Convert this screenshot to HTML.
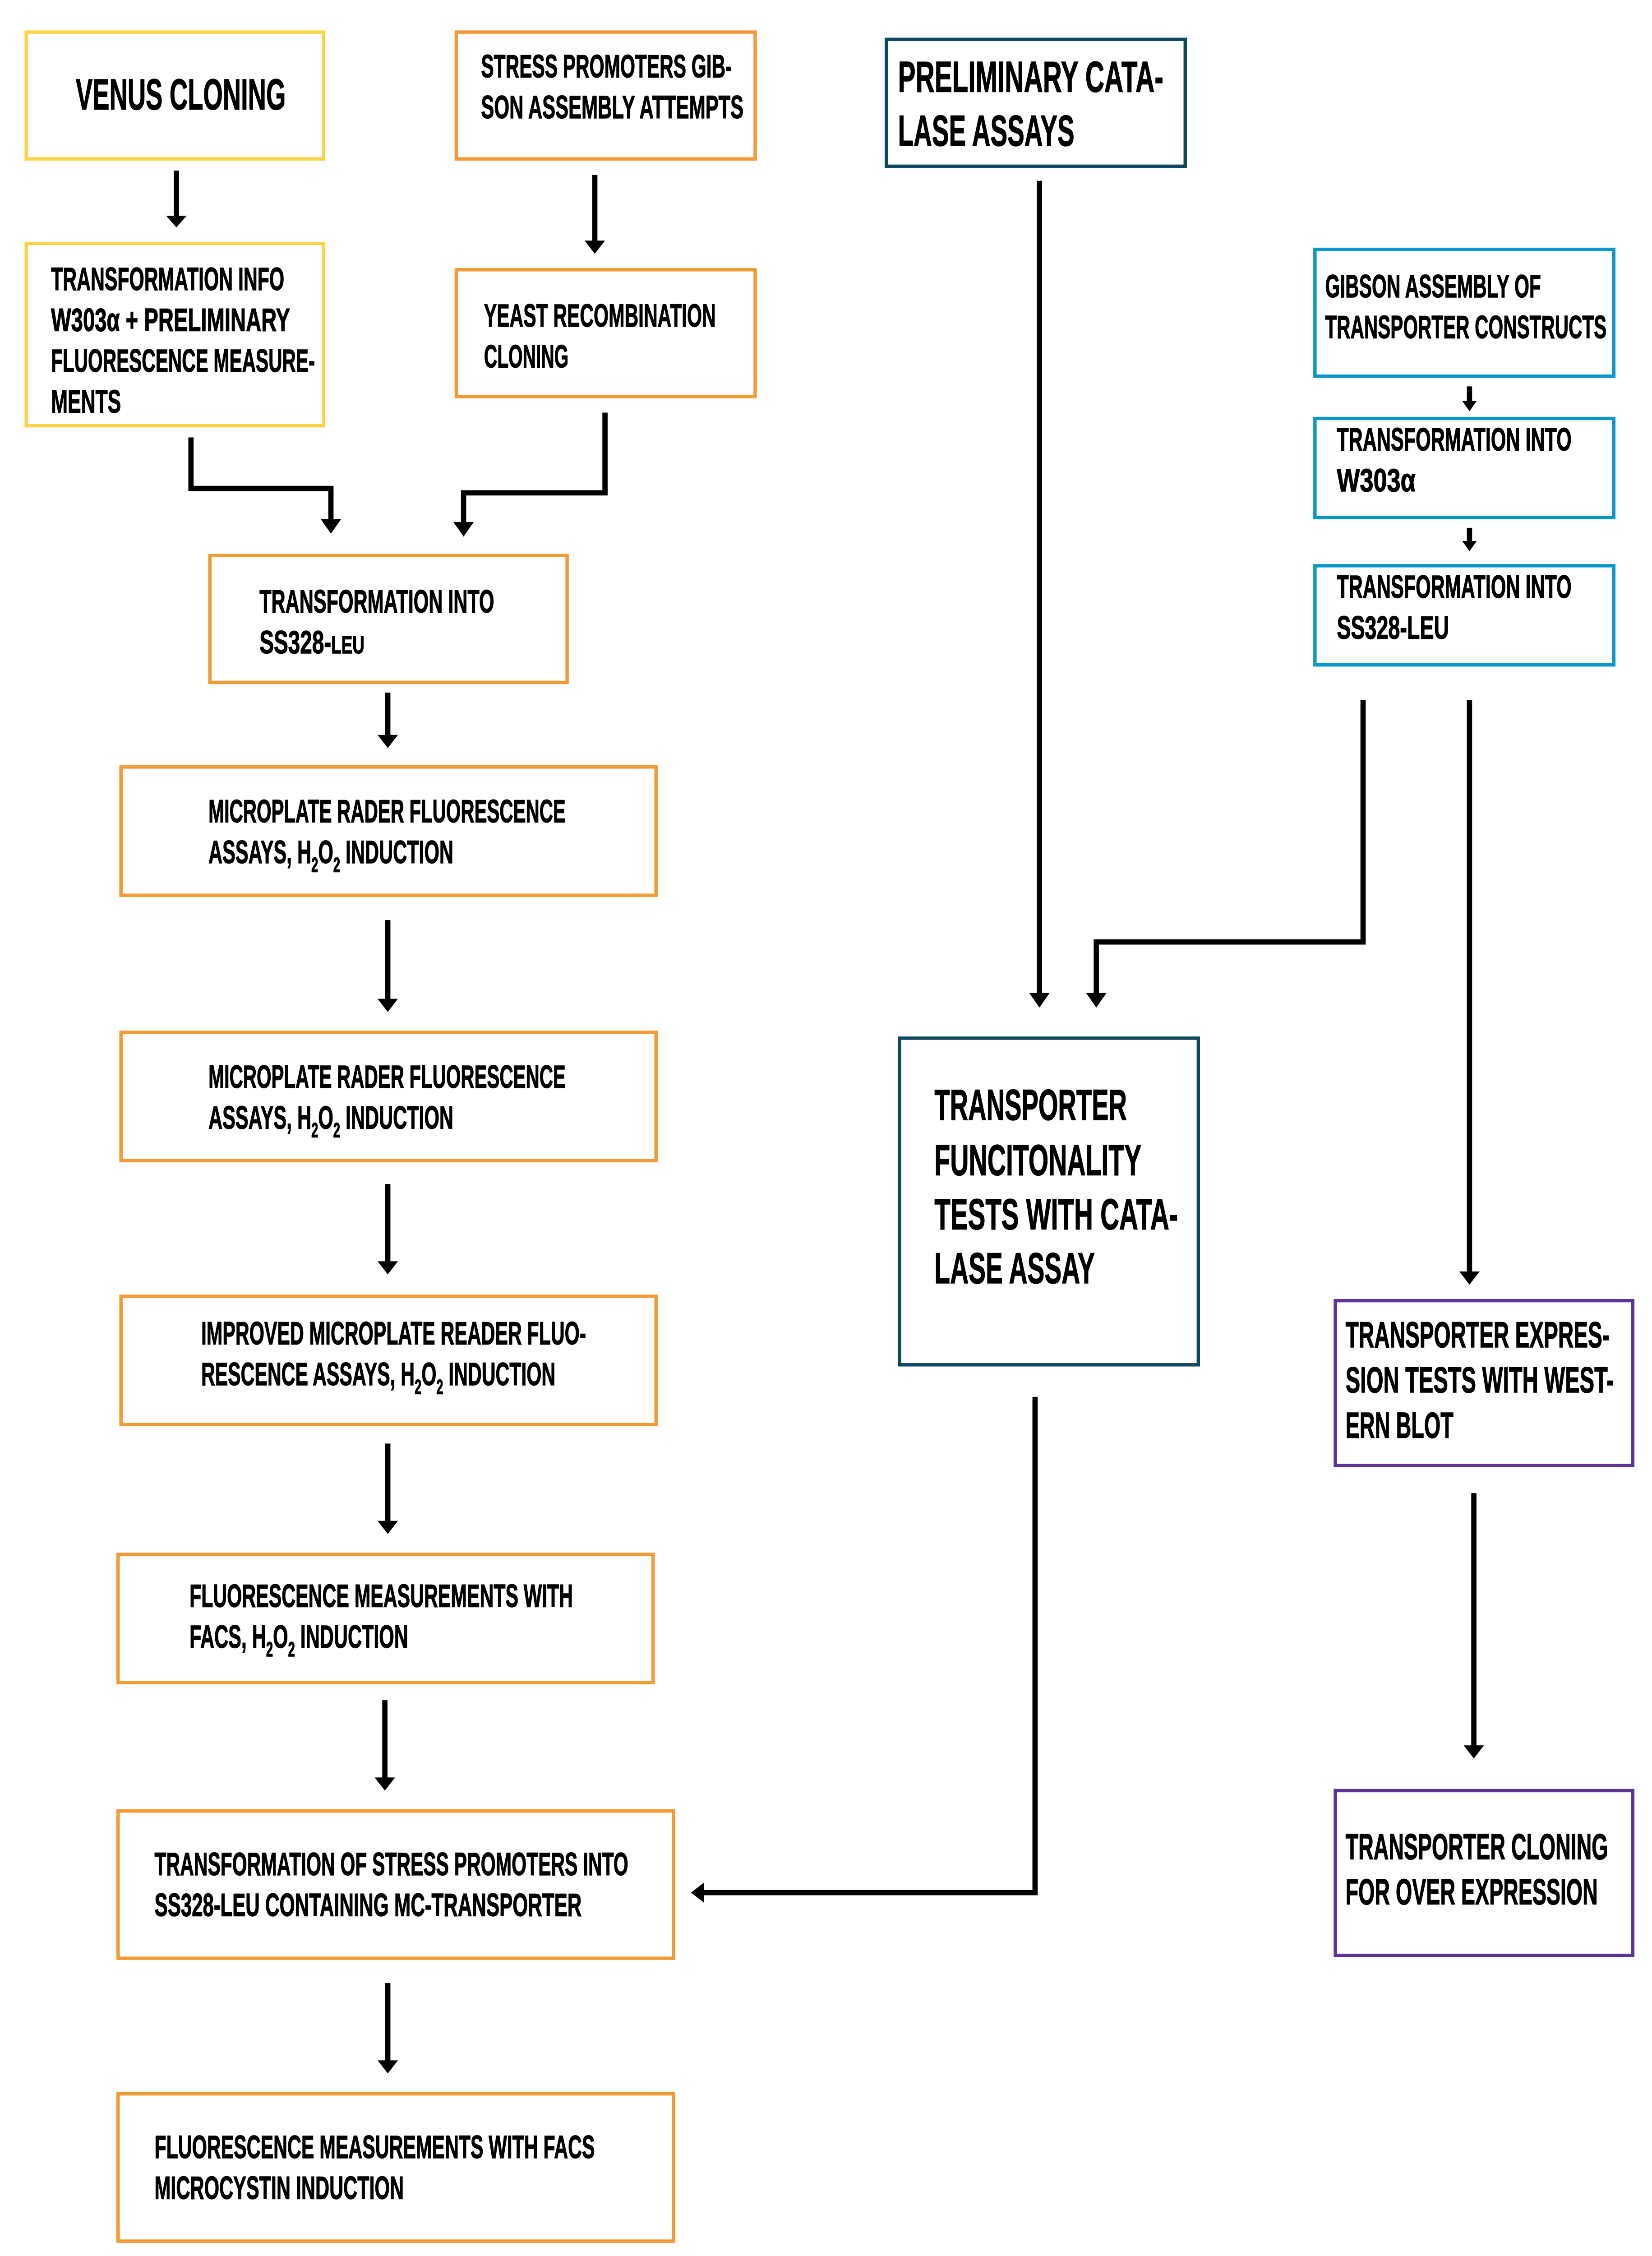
<!DOCTYPE html>
<html><head><meta charset="utf-8">
<style>
html,body{margin:0;padding:0;background:#fff;width:3662px;height:5064px;overflow:hidden;}
svg{display:block;position:absolute;left:0;top:0;}
text{font-family:"Liberation Sans",sans-serif;font-weight:bold;fill:#000;stroke:#000;stroke-width:0.45;}
</style></head>
<body>
<svg width="3662" height="5064" viewBox="0 0 1133.2 1567" preserveAspectRatio="none" xmlns="http://www.w3.org/2000/svg">
<rect width="1140" height="1580" fill="#fff"/>
<g fill="none" stroke-width="2.3">
<rect x="18" y="22" width="204" height="87" stroke="#FDD34A"/>
<rect x="313" y="22" width="205" height="87" stroke="#F49A35"/>
<rect x="608" y="27" width="205" height="87" stroke="#0E4761"/>
<rect x="18" y="167" width="204" height="125" stroke="#FDD34A"/>
<rect x="313" y="185" width="205" height="87" stroke="#F49A35"/>
<rect x="902" y="171" width="205" height="87" stroke="#0A96CC"/>
<rect x="902" y="287" width="205" height="68" stroke="#0A96CC"/>
<rect x="902" y="388" width="205" height="68" stroke="#0A96CC"/>
<rect x="144" y="381" width="245" height="87" stroke="#F49A35"/>
<rect x="83" y="526" width="367" height="88" stroke="#F49A35"/>
<rect x="83" y="708" width="367" height="88" stroke="#F49A35"/>
<rect x="83" y="889" width="367" height="88" stroke="#F49A35"/>
<rect x="81" y="1066" width="367" height="88" stroke="#F49A35"/>
<rect x="81" y="1242" width="381" height="101" stroke="#F49A35"/>
<rect x="81" y="1436" width="381" height="101" stroke="#F49A35"/>
<rect x="617" y="712" width="205" height="224" stroke="#0E4761"/>
<rect x="916" y="892" width="204" height="113" stroke="#5B3496"/>
<rect x="916" y="1228" width="204" height="113" stroke="#5B3496"/>
</g>
<g fill="none" stroke="#000" stroke-width="3.6">
<path d="M121 117V150"/>
<path d="M408 120V167"/>
<path d="M131 300V335H227V358"/>
<path d="M415 283V338H318V360"/>
<path d="M266 475V506"/>
<path d="M266 631V687"/>
<path d="M266 812V867"/>
<path d="M266 990V1045"/>
<path d="M264 1166V1221"/>
<path d="M266 1360V1415"/>
<path d="M713 124V683"/>
<path d="M935 480V646H752V683"/>
<path d="M1008 480V874"/>
<path d="M1008 265V277"/>
<path d="M1008 362V373"/>
<path d="M710 958V1298H481"/>
<path d="M1011 1024V1199"/>
</g>
<g fill="#000">
<path d="M114 148H128L121 156Z"/>
<path d="M401 165H415L408 174Z"/>
<path d="M220 356H234L227 366Z"/>
<path d="M311 358H325L318 368Z"/>
<path d="M259 504H273L266 513Z"/>
<path d="M259 685H273L266 694Z"/>
<path d="M259 865H273L266 874Z"/>
<path d="M259 1043H273L266 1052Z"/>
<path d="M257 1219H271L264 1228Z"/>
<path d="M259 1413H273L266 1422Z"/>
<path d="M706 681H720L713 691Z"/>
<path d="M745 681H759L752 691Z"/>
<path d="M1001 872H1015L1008 881Z"/>
<path d="M1003 275H1013L1008 282Z"/>
<path d="M1003 371H1013L1008 378Z"/>
<path d="M1004 1197H1018L1011 1206Z"/>
<path d="M483 1291V1305L474 1298Z"/>
</g>
<g>
<text x="52" y="75" font-size="30" textLength="144" lengthAdjust="spacingAndGlyphs">VENUS CLONING</text>
<text x="330" y="53" font-size="22" textLength="172" lengthAdjust="spacingAndGlyphs">STRESS PROMOTERS GIB-</text>
<text x="330" y="81" font-size="22" textLength="180" lengthAdjust="spacingAndGlyphs">SON ASSEMBLY ATTEMPTS</text>
<text x="616" y="63" font-size="30" textLength="182" lengthAdjust="spacingAndGlyphs">PRELIMINARY CATA-</text>
<text x="616" y="100" font-size="30" textLength="121" lengthAdjust="spacingAndGlyphs">LASE ASSAYS</text>
<text x="35" y="199" font-size="22" textLength="160" lengthAdjust="spacingAndGlyphs">TRANSFORMATION INFO</text>
<text x="35" y="227" font-size="22" textLength="164" lengthAdjust="spacingAndGlyphs">W303α + PRELIMINARY</text>
<text x="35" y="255" font-size="22" textLength="181" lengthAdjust="spacingAndGlyphs">FLUORESCENCE MEASURE-</text>
<text x="35" y="283" font-size="22" textLength="48" lengthAdjust="spacingAndGlyphs">MENTS</text>
<text x="332" y="224" font-size="22" textLength="159" lengthAdjust="spacingAndGlyphs">YEAST RECOMBINATION</text>
<text x="332" y="252" font-size="22" textLength="58" lengthAdjust="spacingAndGlyphs">CLONING</text>
<text x="909" y="204" font-size="22" textLength="148" lengthAdjust="spacingAndGlyphs">GIBSON ASSEMBLY OF</text>
<text x="909" y="232" font-size="22" textLength="193" lengthAdjust="spacingAndGlyphs">TRANSPORTER CONSTRUCTS</text>
<text x="917" y="309" font-size="22" textLength="161" lengthAdjust="spacingAndGlyphs">TRANSFORMATION INTO</text>
<text x="917" y="337" font-size="22" textLength="54" lengthAdjust="spacingAndGlyphs">W303α</text>
<text x="917" y="410" font-size="22" textLength="161" lengthAdjust="spacingAndGlyphs">TRANSFORMATION INTO</text>
<text x="917" y="438" font-size="22" textLength="77" lengthAdjust="spacingAndGlyphs">SS328-LEU</text>
<text x="178" y="420" font-size="22" textLength="161" lengthAdjust="spacingAndGlyphs">TRANSFORMATION INTO</text>
<text x="178" y="448" font-size="22" textLength="72" lengthAdjust="spacingAndGlyphs">SS328-<tspan font-size="17">LEU</tspan></text>
<text x="143" y="564" font-size="22" textLength="245" lengthAdjust="spacingAndGlyphs">MICROPLATE RADER FLUORESCENCE</text>
<text x="143" y="592" font-size="22" textLength="168" lengthAdjust="spacingAndGlyphs">ASSAYS, H<tspan font-size="14" dy="6">2</tspan><tspan dy="-6">O</tspan><tspan font-size="14" dy="6">2</tspan><tspan dy="-6"> INDUCTION</tspan></text>
<text x="143" y="746" font-size="22" textLength="245" lengthAdjust="spacingAndGlyphs">MICROPLATE RADER FLUORESCENCE</text>
<text x="143" y="774" font-size="22" textLength="168" lengthAdjust="spacingAndGlyphs">ASSAYS, H<tspan font-size="14" dy="6">2</tspan><tspan dy="-6">O</tspan><tspan font-size="14" dy="6">2</tspan><tspan dy="-6"> INDUCTION</tspan></text>
<text x="138" y="922" font-size="22" textLength="264" lengthAdjust="spacingAndGlyphs">IMPROVED MICROPLATE READER FLUO-</text>
<text x="138" y="950" font-size="22" textLength="243" lengthAdjust="spacingAndGlyphs">RESCENCE ASSAYS, H<tspan font-size="14" dy="6">2</tspan><tspan dy="-6">O</tspan><tspan font-size="14" dy="6">2</tspan><tspan dy="-6"> INDUCTION</tspan></text>
<text x="130" y="1102" font-size="22" textLength="263" lengthAdjust="spacingAndGlyphs">FLUORESCENCE MEASUREMENTS WITH</text>
<text x="130" y="1130" font-size="22" textLength="150" lengthAdjust="spacingAndGlyphs">FACS, H<tspan font-size="14" dy="6">2</tspan><tspan dy="-6">O</tspan><tspan font-size="14" dy="6">2</tspan><tspan dy="-6"> INDUCTION</tspan></text>
<text x="106" y="1286" font-size="22" textLength="325" lengthAdjust="spacingAndGlyphs">TRANSFORMATION OF STRESS PROMOTERS INTO</text>
<text x="106" y="1314" font-size="22" textLength="293" lengthAdjust="spacingAndGlyphs">SS328-LEU CONTAINING MC-TRANSPORTER</text>
<text x="106" y="1480" font-size="22" textLength="302" lengthAdjust="spacingAndGlyphs">FLUORESCENCE MEASUREMENTS WITH FACS</text>
<text x="106" y="1508" font-size="22" textLength="171" lengthAdjust="spacingAndGlyphs">MICROCYSTIN INDUCTION</text>
<text x="641" y="768" font-size="30" textLength="132" lengthAdjust="spacingAndGlyphs">TRANSPORTER</text>
<text x="641" y="806" font-size="30" textLength="142" lengthAdjust="spacingAndGlyphs">FUNCITONALITY</text>
<text x="641" y="843" font-size="30" textLength="167" lengthAdjust="spacingAndGlyphs">TESTS WITH CATA-</text>
<text x="641" y="880" font-size="30" textLength="110" lengthAdjust="spacingAndGlyphs">LASE ASSAY</text>
<text x="923" y="924" font-size="25" textLength="181" lengthAdjust="spacingAndGlyphs">TRANSPORTER EXPRES-</text>
<text x="923" y="955" font-size="25" textLength="184" lengthAdjust="spacingAndGlyphs">SION TESTS WITH WEST-</text>
<text x="923" y="986" font-size="25" textLength="74" lengthAdjust="spacingAndGlyphs">ERN BLOT</text>
<text x="923" y="1275" font-size="25" textLength="180" lengthAdjust="spacingAndGlyphs">TRANSPORTER CLONING</text>
<text x="923" y="1306" font-size="25" textLength="173" lengthAdjust="spacingAndGlyphs">FOR OVER EXPRESSION</text>
</g>
</svg>
</body></html>
